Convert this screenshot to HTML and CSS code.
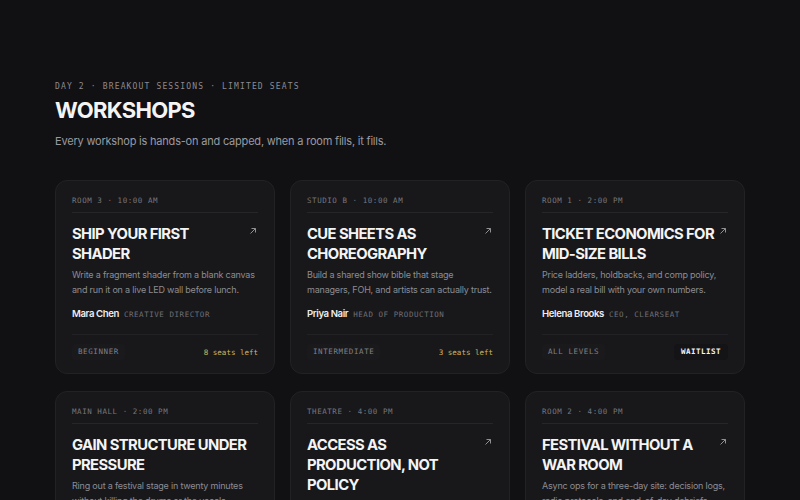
FILE: index.html
```html
<!DOCTYPE html>
<html lang="en">
<head>
<meta charset="utf-8">
<title>Workshops</title>
<link rel="stylesheet" href="styles.css">
</head>
<body>
<main class="page">
  <header class="intro">
    <p class="eyebrow">DAY 2 · BREAKOUT SESSIONS · LIMITED SEATS</p>
    <h1 class="heading">WORKSHOPS</h1>
    <p class="lede">Every workshop is hands-on and capped, when a room fills, it fills.</p>
  </header>

  <section class="grid">
    <article class="card">
      <div class="meta">ROOM 3 · 10:00 AM</div>
      <div class="title-row">
        <h2 class="title">SHIP YOUR FIRST SHADER</h2>
        <svg class="arrow" viewBox="0 0 10 10"><path d="M2.5 7.5 L7.5 2.5 M3.5 2.5 H7.5 V6.5"/></svg>
      </div>
      <p class="desc">Write a fragment shader from a blank canvas and run it on a live LED wall before lunch.</p>
      <div class="speaker"><span class="name">Mara Chen</span><span class="role">CREATIVE DIRECTOR</span></div>
      <div class="foot"><span class="tag">BEGINNER</span><span class="seats">8 seats left</span></div>
    </article>

    <article class="card">
      <div class="meta">STUDIO B · 10:00 AM</div>
      <div class="title-row">
        <h2 class="title">CUE SHEETS AS CHOREOGRAPHY</h2>
        <svg class="arrow" viewBox="0 0 10 10"><path d="M2.5 7.5 L7.5 2.5 M3.5 2.5 H7.5 V6.5"/></svg>
      </div>
      <p class="desc">Build a shared show bible that stage managers, FOH, and artists can actually trust.</p>
      <div class="speaker"><span class="name">Priya Nair</span><span class="role">HEAD OF PRODUCTION</span></div>
      <div class="foot"><span class="tag">INTERMEDIATE</span><span class="seats">3 seats left</span></div>
    </article>

    <article class="card">
      <div class="meta">ROOM 1 · 2:00 PM</div>
      <div class="title-row">
        <h2 class="title">TICKET ECONOMICS FOR MID-SIZE BILLS</h2>
        <svg class="arrow" viewBox="0 0 10 10"><path d="M2.5 7.5 L7.5 2.5 M3.5 2.5 H7.5 V6.5"/></svg>
      </div>
      <p class="desc">Price ladders, holdbacks, and comp policy, model a real bill with your own numbers.</p>
      <div class="speaker"><span class="name">Helena Brooks</span><span class="role">CEO, CLEARSEAT</span></div>
      <div class="foot"><span class="tag">ALL LEVELS</span><span class="waitlist">WAITLIST</span></div>
    </article>

    <article class="card">
      <div class="meta">MAIN HALL · 2:00 PM</div>
      <div class="title-row">
        <h2 class="title">GAIN STRUCTURE UNDER PRESSURE</h2>
      </div>
      <p class="desc">Ring out a festival stage in twenty minutes without killing the drums or the vocals.</p>
      <div class="speaker"><span class="name">Jonas Weber</span><span class="role">SYSTEMS ENGINEER</span></div>
      <div class="foot"><span class="tag">ADVANCED</span><span class="seats">5 seats left</span></div>
    </article>

    <article class="card">
      <div class="meta">THEATRE · 4:00 PM</div>
      <div class="title-row">
        <h2 class="title">ACCESS AS PRODUCTION, NOT POLICY</h2>
        <svg class="arrow" viewBox="0 0 10 10"><path d="M2.5 7.5 L7.5 2.5 M3.5 2.5 H7.5 V6.5"/></svg>
      </div>
      <p class="desc">Captioning, quiet rooms, and step-free routes built into the run sheet from day one.</p>
      <div class="speaker"><span class="name">Amara Okafor</span><span class="role">ACCESS LEAD</span></div>
      <div class="foot"><span class="tag">ALL LEVELS</span><span class="seats">6 seats left</span></div>
    </article>

    <article class="card">
      <div class="meta">ROOM 2 · 4:00 PM</div>
      <div class="title-row">
        <h2 class="title">FESTIVAL WITHOUT A WAR ROOM</h2>
        <svg class="arrow" viewBox="0 0 10 10"><path d="M2.5 7.5 L7.5 2.5 M3.5 2.5 H7.5 V6.5"/></svg>
      </div>
      <p class="desc">Async ops for a three-day site: decision logs, radio protocols, and end-of-day debriefs.</p>
      <div class="speaker"><span class="name">Sam Ortiz</span><span class="role">SITE DIRECTOR</span></div>
      <div class="foot"><span class="tag">INTERMEDIATE</span><span class="seats">4 seats left</span></div>
    </article>
  </section>
</main>
</body>
</html>
```

FILE: styles.css
```css
* { box-sizing: border-box; }

html, body {
  margin: 0;
  background: #111114;
}

body {
  font-family: Inter, "Noto Sans", sans-serif;
  color: #f2f2f3;
}

.page {
  padding: 82px 55px 40px;
}

.intro {
  display: flex;
  flex-direction: column;
}

.eyebrow {
  margin: 0;
  font-family: "DejaVu Sans Mono", monospace;
  font-size: 8px;
  line-height: 10px;
  letter-spacing: 1.15px;
  color: #8b8b90;
}

.heading {
  margin: 3px 0 0;
  font-size: 22px;
  line-height: 30px;
  font-weight: 700;
  letter-spacing: -0.03em;
  color: #f4f4f5;
}

.lede {
  margin: 8px 0 0;
  font-size: 11px;
  line-height: 16px;
  letter-spacing: -0.2px;
  color: #9a9aa0;
}

.grid {
  margin-top: 31px;
  display: grid;
  grid-template-columns: repeat(3, 220px);
  column-gap: 15px;
  row-gap: 17px;
}

.card {
  display: flex;
  flex-direction: column;
  padding: 15px 16px 13px;
  background: #18181b;
  border: 1px solid #222226;
  border-radius: 12px;
}

.meta {
  font-family: "DejaVu Sans Mono", monospace;
  font-size: 7.5px;
  line-height: 10px;
  letter-spacing: 0.55px;
  color: #76767b;
  padding-bottom: 6px;
  border-bottom: 1px solid #25252a;
}

.title-row {
  display: flex;
  align-items: flex-start;
  gap: 3px;
  margin-top: 11px;
}

.title {
  flex: 1;
  margin: 0;
  font-size: 14.8px;
  line-height: 20px;
  font-weight: 700;
  letter-spacing: -0.04em;
  color: #f4f4f5;
}

.arrow {
  width: 10px;
  height: 10px;
  margin-top: 2px;
  flex: none;
  fill: none;
  stroke: #8f8f94;
  stroke-width: 1;
}

.desc {
  margin: 4px 0 0;
  font-size: 9px;
  line-height: 14.5px;
  letter-spacing: -0.2px;
  color: #8c8c92;
}

.speaker {
  margin-top: 10px;
  display: flex;
  align-items: baseline;
  gap: 5px;
  line-height: 14px;
}

.name {
  font-size: 9.6px;
  font-weight: 600;
  letter-spacing: -0.4px;
  color: #ededee;
}

.role {
  font-family: "DejaVu Sans Mono", monospace;
  font-size: 7.5px;
  letter-spacing: 0.55px;
  color: #6f6f74;
}

.foot {
  margin-top: auto;
  padding-top: 9px;
  border-top: 1px solid #222226;
  display: flex;
  justify-content: space-between;
  align-items: center;
}

.speaker + .foot { margin-top: 12px; }

.tag {
  font-family: "DejaVu Sans Mono", monospace;
  font-size: 7.5px;
  line-height: 8px;
  letter-spacing: 0.6px;
  color: #808085;
  padding: 4px 6px;
  border-radius: 4px;
  background: rgba(255, 255, 255, 0.012);
}

.seats {
  font-family: "DejaVu Sans Mono", monospace;
  font-size: 7.5px;
  color: #d2b95e;
}

.waitlist {
  font-family: "DejaVu Sans Mono", monospace;
  font-size: 7.5px;
  line-height: 8px;
  font-weight: 700;
  letter-spacing: 0.5px;
  color: #f4f4f5;
  padding: 4px 7px;
  border-radius: 4px;
  background: #141417;
}
```
